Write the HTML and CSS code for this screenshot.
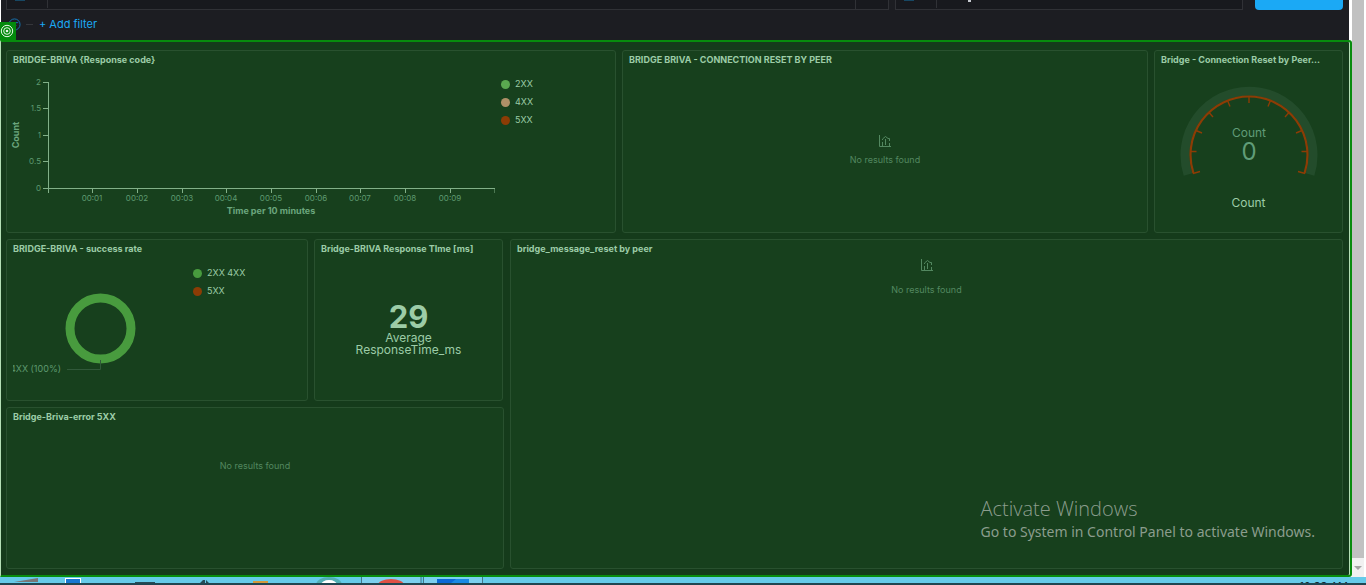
FILE: index.html
```html
<!DOCTYPE html>
<html lang="en">
<head>
<meta charset="utf-8">
<title>Bridge BRIVA dashboard</title>
<link rel="stylesheet" href="styles.css">
</head>
<body>
<div class="screen">
  <div class="window">
    <div class="content">
      <header class="topbar">
        <div class="query-row">
          <div class="query-box query-main"><span class="query-prefix"><span class="query-icon"></span></span><span class="query-value"></span><span class="query-lang"></span></div>
          <div class="query-box query-date"><span class="query-prefix"><span class="query-icon"></span></span><span class="query-value"><span class="descender"></span></span></div>
          <button class="refresh" type="button" aria-label="Refresh"></button>
        </div>
        <div class="filter-row">
          <svg class="filter-icon" viewBox="0 0 14 14" fill="none" stroke="#1777b8"><circle cx="7" cy="7" r="6"/><path d="M3 5h8M5 8h4M6 10h2"/></svg>
          <span class="dash"></span>
          <button class="add-filter" type="button">+ Add filter</button>
        </div>
        <svg class="marker" viewBox="0 0 16 18"><rect width="16" height="18" fill="#048a0c"/><g fill="none" stroke="#e6f6e6"><circle cx="7" cy="9" r="5.7"/><circle cx="7" cy="9" r="3.3"/></g><circle cx="7" cy="9" r="1.3" fill="#e6f6e6"/></svg>
      </header>
      <main class="dashboard">
        <div class="row row-top">
          <section class="panel panel-codes">
            <h2>BRIDGE-BRIVA {Response code}</h2>
            <div class="chart-line">
              <svg class="axes" viewBox="0 0 488 150" role="img" aria-label="Count per 10 minutes">
                <g class="axis-lines">
                  <path d="M36 14.500h6M36 40.500h6M36 67.500h6M36 93.500h6M36 120.500h452.500M41.500 14v111M85.500 120v5M130.500 120v5M175.500 120v5M219.500 120v5M264.500 120v5M309.500 120v5M353.500 120v5M398.500 120v5M443.500 120v5M488 120v5"/>
                </g>
                <g class="tick-text end">
                  <text x="34" y="17">2</text><text x="34" y="43">1.5</text><text x="34" y="70">1</text><text x="34" y="96">0.5</text><text x="34" y="123">0</text>
                </g>
                <g class="tick-text middle">
                  <text x="85" y="133">00:01</text><text x="130" y="133">00:02</text><text x="175" y="133">00:03</text><text x="219" y="133">00:04</text><text x="264" y="133">00:05</text><text x="309" y="133">00:06</text><text x="353" y="133">00:07</text><text x="398" y="133">00:08</text><text x="443" y="133">00:09</text>
                </g>
                <text class="axis-title" x="264" y="146">Time per 10 minutes</text>
                <text class="axis-title" transform="translate(12 67) rotate(-90)">Count</text>
              </svg>
              <ul class="legend">
                <li><span class="dot light"></span>2XX</li>
                <li><span class="dot tan"></span>4XX</li>
                <li><span class="dot rust"></span>5XX</li>
              </ul>
            </div>
          </section>
          <section class="panel panel-reset">
            <h2>BRIDGE BRIVA - CONNECTION RESET BY PEER</h2>
            <div class="empty centered">
              <svg class="empty-icon" viewBox="0 0 12 12"><path d="M.5 0v11.500H12M3.500 7v4M6.500 4v6M10.500 8v3M3.500 5v-1l3-2.500L9 3.500h1.500V6"/></svg>
              <p>No results found</p>
            </div>
          </section>
          <section class="panel panel-gauge">
            <h2>Bridge - Connection Reset by Peer...</h2>
            <div class="gauge">
              <svg viewBox="0 0 138 92" role="img" aria-label="Count 0">
                <path d="M8 88.500A64 64 0 1 1 130 88.500" fill="none" stroke="#234c2b" stroke-width="9"/>
                <g fill="none" stroke="#8c3c05">
                  <path d="M13.400 87.200A58.500 58.500 0 1 1 124.600 87.200" stroke-width="2.200"/>
                  <path d="M13 87.500l7-2M10.500 65.500h6M16 44.500l6 2.500M29 26.500l4 4.500M47.500 14.500l2.500 6M69 11v6M90.500 14.500L88 20.500M109 26.500L105 31M122 44.500L116 47M127.500 65.500h-6M125 87.500l-7-2" stroke-width="1.400"/>
                </g>
                <text class="gauge-label" x="69" y="51">Count</text>
                <text class="gauge-value" x="69" y="74">0</text>
              </svg>
              <p>Count</p>
            </div>
          </section>
        </div>
        <div class="row row-bottom">
          <div class="left">
            <div class="row row-mid">
              <section class="panel panel-rate">
                <h2>BRIDGE-BRIVA - success rate</h2>
                <div class="chart-pie">
                  <svg class="pie" viewBox="0 0 180 130" role="img" aria-label="2XX 4XX 100%">
                    <circle cx="87.500" cy="71.500" r="30.500" fill="none" stroke="#489b3e" stroke-width="9"/>
                    <path d="M54 112.500h33.500V103" fill="none" stroke="#31593a"/>
                    <text x="48" y="115">4XX (100%)</text>
                  </svg>
                  <ul class="legend">
                    <li><span class="dot green"></span>2XX 4XX</li>
                    <li><span class="dot rust"></span>5XX</li>
                  </ul>
                </div>
              </section>
              <section class="panel panel-time">
                <h2>Bridge-BRIVA Response TIme [ms]</h2>
                <div class="metric"><strong>29</strong><span>Average ResponseTime_ms</span></div>
              </section>
            </div>
            <section class="panel panel-error">
              <h2>Bridge-Briva-error 5XX</h2>
              <div class="empty low"><p>No results found</p></div>
            </section>
          </div>
          <section class="panel panel-message">
            <h2>bridge_message_reset by peer</h2>
            <div class="empty top">
              <svg class="empty-icon" viewBox="0 0 12 12"><path d="M.5 0v11.500H12M3.500 7v4M6.500 4v6M10.500 8v3M3.500 5v-1l3-2.500L9 3.500h1.500V6"/></svg>
              <p>No results found</p>
            </div>
          </section>
        </div>
      </main>
    </div>
    <div class="scrollbar"><span class="scroll-arrow"></span></div>
  </div>
  <footer class="taskbar">
    <svg class="apps" viewBox="0 0 520 8">
      <path d="M14 5L38 1v4z" fill="#777"/><path d="M65 1h16v5H65z" fill="#fff"/><path d="M66 2h14v4H66z" fill="#1677d2"/>
      <path d="M135 5h20v1h-20zM200 6l3-3h2v3zM206 3l3 3h-3z" fill="#244d59"/><path d="M253 4h15v4h-15z" fill="#d29a3c"/>
      <path d="M316 8a13 8 0 0 1 26 0z" fill="#51afb5"/><path d="M321 8a8 5 0 0 1 16 0z" fill="#fff"/>
      <path d="M362 0h59v8h-59zM424 0h58v8h-58z" fill="#7bd0ef"/><path d="M361.500 0v8M421 0v8M423.500 0v8M482.500 0v8" stroke="#42778a"/>
      <path d="M378 8a13 6 0 0 1 26 0z" fill="#df5045"/><path d="M437 2h32v6h-32z" fill="#0869d8"/><path d="M456 2h13v4h-18z" fill="#188ae5"/>
    </svg>
    <span class="clock">12:33 AM</span>
  </footer>
  <div class="activate"><strong>Activate Windows</strong><span>Go to System in Control Panel to activate Windows.</span></div>
</div>
</body>
</html>
```

FILE: styles.css
```css
* { box-sizing: border-box; }
body { margin: 0; background: #fff; font-family: Inter, "Liberation Sans", sans-serif; color: #9ccca7; }
h2, p, ul { margin: 0; padding: 0; }
button { border: 0; padding: 0; font: inherit; cursor: pointer; }
svg { display: block; flex: none; }

.screen { position: relative; display: flex; flex-direction: column; height: 100vh; overflow: hidden; }
.window { display: flex; flex: 1; min-height: 0; padding-right: 2px; }
.content { display: flex; flex: 1; flex-direction: column; min-width: 0; }
.scrollbar { display: flex; align-items: flex-end; width: 12px; background: #c1c1c1; }
.scroll-arrow { display: flex; align-items: center; justify-content: center; width: 12px; height: 19px; background: #f1f1f1; }
.scroll-arrow::before { content: ""; border: 4px solid transparent; border-top-color: #a3a3a3; border-bottom: 0; }

.topbar { position: relative; height: 40px; margin: 0 3px 0 1px; background: #1c1d22; box-shadow: 2px 0 #fff; }
.query-row { display: flex; height: 10px; padding: 0 6px 0 5px; }
.query-box { display: flex; border: 1px solid #303136; border-top: 0; background: #18191e; }
.query-main { flex: 883 1 883px; margin-right: 6px; }
.query-date { flex: 348 1 348px; margin-right: 12px; }
.query-prefix { width: 41px; height: 8px; padding-left: 8px; border-right: 1px solid #303136; }
.query-icon { display: block; width: 10px; height: 1px; background: #174763; }
.query-value { flex: 1; padding-left: 31px; }
.query-lang { width: 33px; border-left: 1px solid #303136; }
.descender { display: block; width: 3px; height: 2px; background: #c6c9d0; }
.refresh { width: 88px; height: 10px; border-radius: 0 0 4px 4px; background: #1ba9f5; }
.filter-row { display: flex; align-items: center; gap: 5px; height: 28px; padding-left: 7px; }
.filter-icon { width: 13px; height: 13px; }
.dash { width: 7px; height: 1px; background: #35363b; }
.add-filter { margin-left: 1px; background: none; color: #1ba9f5; font-size: 11px; line-height: 16px; }
.marker { position: absolute; left: -1px; bottom: 0; width: 16px; height: 18px; }

.dashboard { display: flex; flex: 1; flex-direction: column; gap: 6px; min-height: 0; padding: 8px 7px 6px 5px; border: 2px solid #078c0d; border-left: 1px solid #b4dfb5; border-top-right-radius: 3px; border-bottom-right-radius: 3px; background: #153b1b; box-shadow: inset -1px 0 #b4dfb5; }
.row { display: flex; gap: 6px; min-height: 0; }
.row-top { flex: 183; }
.row-bottom { flex: 330; }
.row-mid { flex: 1 1 162px; padding-right: 1px; }
.left { display: flex; flex: 498 1 498px; flex-direction: column; gap: 6px; min-width: 0; }
.panel { display: flex; flex-direction: column; min-width: 0; min-height: 0; overflow: hidden; border: 1px solid #29512f; border-radius: 3px; background: #17401d; }
.panel h2 { padding: 2px 6px 1px; font-size: 9px; font-weight: 700; line-height: 14px; white-space: nowrap; }
.panel-codes { flex: 610 1 610px; }
.panel-reset { flex: 526 1 526px; }
.panel-gauge { flex: 189 1 189px; }
.panel-rate { flex: 302 1 302px; }
.panel-time { flex: 189 1 189px; }
.panel-error { flex: 1 1 162px; }
.panel-message { flex: 833 1 833px; }

.chart-line, .chart-pie { display: flex; }
.axes { width: 488px; height: 150px; }
.axis-lines { fill: none; stroke: #82b088; }
.tick-text { fill: #5e9a70; font-size: 8px; }
.end { text-anchor: end; }
.middle { text-anchor: middle; }
.axis-title { fill: #6ba67d; font-size: 9px; font-weight: 700; text-anchor: middle; }
.legend { list-style: none; font-size: 9px; line-height: 18px; }
.chart-line .legend { padding: 7px 0 0 6px; }
.legend li { display: flex; align-items: center; gap: 5px; }
.dot { width: 9px; height: 9px; border-radius: 50%; }
.light { background: #5aa850; }
.tan { background: #ae9067; }
.rust { background: #8c3c05; }
.green { background: #489b3e; }
.chart-pie { padding-left: 6px; }
.chart-pie .legend { padding-top: 7px; }
.pie { width: 180px; height: 130px; }
.pie text { fill: #5e9a70; font-size: 9px; text-anchor: end; }

.empty { display: flex; flex: 1; flex-direction: column; align-items: center; color: #538860; font-size: 9px; line-height: 14px; }
.empty-icon { width: 12px; height: 12px; fill: none; stroke: #538860; }
.centered { justify-content: center; gap: 6px; padding-top: 2px; }
.top { gap: 12px; padding-top: 2px; }
.low { padding-top: 34px; }

.gauge { display: flex; flex-direction: column; align-items: center; padding-top: 18px; }
.gauge svg { width: 138px; height: 92px; }
.gauge p { padding-top: 17px; font-size: 12px; line-height: 16px; }
.gauge-label, .gauge-value { fill: #609c78; text-anchor: middle; }
.gauge-label { font-size: 12px; }
.gauge-value { font-size: 24px; }
.metric { display: flex; flex: 1; flex-direction: column; align-items: center; justify-content: center; padding: 0 36px; text-align: center; font-size: 12px; line-height: 12px; }
.metric strong { font-size: 31px; line-height: 31px; }

.activate { position: absolute; right: 51px; bottom: 43px; display: flex; flex-direction: column; color: #8b9d8d; font-family: "Noto Sans", "Open Sans", sans-serif; font-size: 14px; line-height: 20px; }
.activate strong { font-family: "Open Sans", "Noto Sans", sans-serif; font-size: 20px; font-weight: 300; line-height: 26px; }
.taskbar { display: flex; justify-content: space-between; height: 8px; overflow: hidden; border-bottom: 2px solid #204651; background: #65cbea; }
.apps { width: 520px; height: 8px; }
.clock { padding: 3px 18px 0 0; color: #102a33; font-size: 11px; line-height: 12px; }
```
